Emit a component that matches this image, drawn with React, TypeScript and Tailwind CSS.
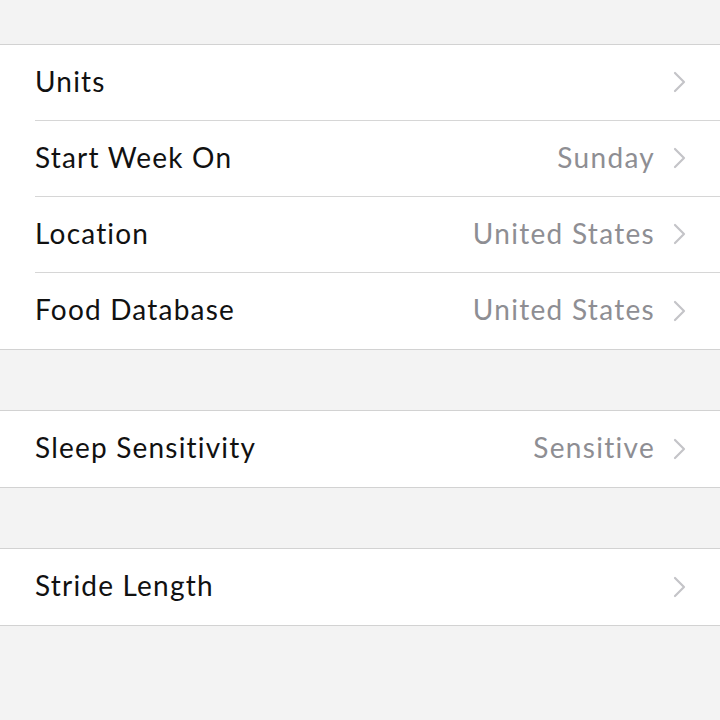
interface Row {
  label: string;
  value?: string;
}

const sections: Row[][] = [
  [
    { label: 'Units' },
    { label: 'Start Week On', value: 'Sunday' },
    { label: 'Location', value: 'United States' },
    { label: 'Food Database', value: 'United States' },
  ],
  [{ label: 'Sleep Sensitivity', value: 'Sensitive' }],
  [{ label: 'Stride Length' }],
];

function Chevron() {
  return (
    <svg width="13" height="22" viewBox="0 0 13 22" className="shrink-0 mt-[3px]">
      <path d="M2 2 L11 11 L2 20" fill="none" stroke="#c4c4c8" strokeWidth="2.2" strokeLinecap="round" strokeLinejoin="round" />
    </svg>
  );
}

export default function App() {
  return (
    <div className="w-[720px] h-[720px] bg-[#f3f3f3] pt-[44px] flex flex-col gap-[60px] overflow-hidden" style={{ fontFamily: 'Lato, "Noto Sans", sans-serif' }}>
      {sections.map((rows, si) => (
        <div key={si} className="bg-white border-y border-[#d2d2d2]">
          {rows.map((r, i) => (
            <div key={r.label} className="pl-[35px]">
              <div className={`h-[76px] pb-[4px] flex items-center pr-[34px] ${i < rows.length - 1 ? 'border-b border-[#d6d6d6]' : ''}`}>
                <span className="flex-1 text-[28px] tracking-[1.2px] text-[#111111]">{r.label}</span>
                {r.value && <span className="text-[28px] tracking-[1.3px] text-[#8e8e93] mr-[18px]">{r.value}</span>}
                <Chevron />
              </div>
            </div>
          ))}
        </div>
      ))}
    </div>
  );
}
